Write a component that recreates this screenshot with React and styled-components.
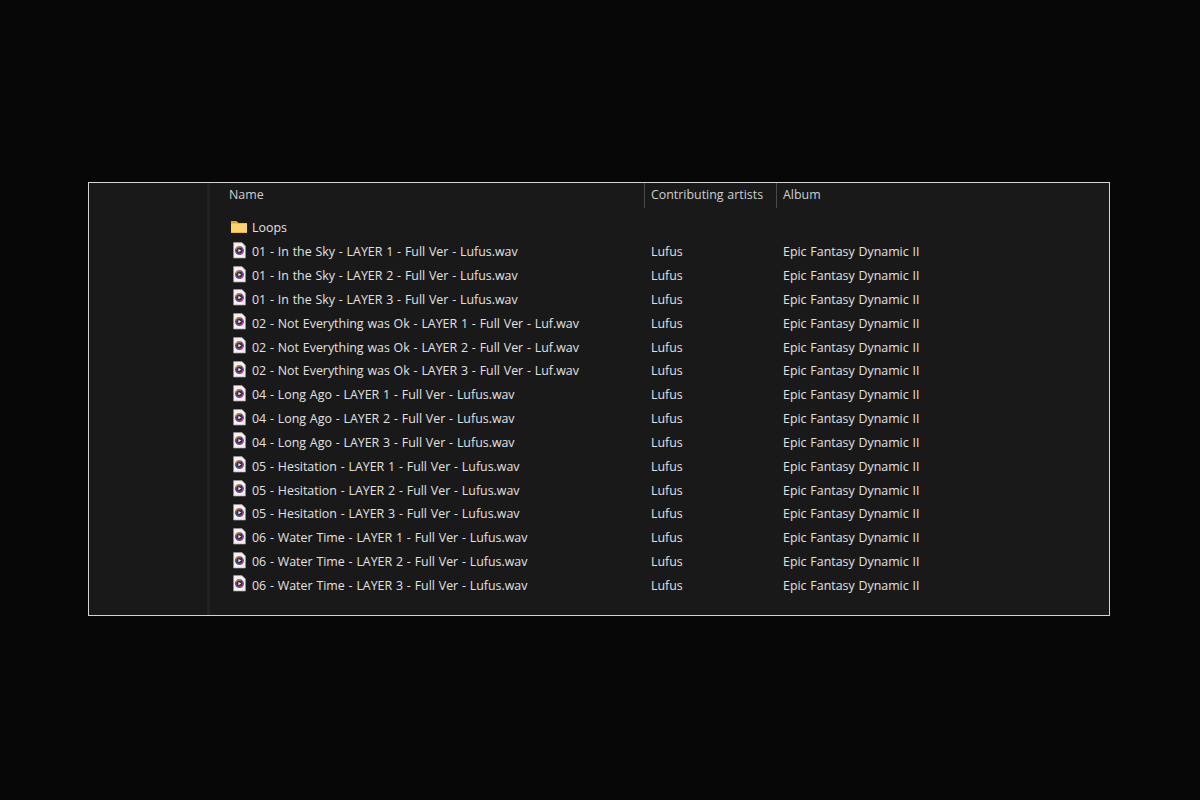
import styled, { createGlobalStyle } from "styled-components";

const GlobalStyle = createGlobalStyle`
  html, body {
    margin: 0;
    height: 100%;
    background: #060606;
  }
`;
const Page = styled.div`
  box-sizing: border-box;
  width: 1200px;
  height: 800px;
  padding: 182px 90px 0 88px;
  font-family: "Open Sans", "Noto Sans", sans-serif;
  font-size: 12.4px;
  word-spacing: 0.6px;
`;
const Frame = styled.div`
  box-sizing: border-box;
  display: flex;
  width: 1022px;
  height: 434px;
  background: #191919;
  border: 1px solid #d4d4d4;
`;
const Sidebar = styled.div`
  box-sizing: border-box;
  width: 121px;
  border-right: 3px solid #222222;
`;
const Main = styled.div`
  flex: 1;
  display: flex;
  flex-direction: column;
`;
const Header = styled.div`
  display: grid;
  grid-template-columns: 434px 132px 1fr;
  height: 25px;
  color: #cfcfcf;
`;
const HeaderCell = styled.div`
  display: flex;
  align-items: center;
  padding: 0 0 2px ${(p) => (p.$first ? "19px" : "6px")};
  border-left: ${(p) => (p.$first ? "none" : "1px solid #4a4a4a")};
`;
const Rows = styled.div`
  display: flex;
  flex-direction: column;
  padding-top: 8px;
`;
const Row = styled.div`
  display: grid;
  grid-template-columns: 434px 132px 1fr;
  height: 23.84px;
  align-items: center;
  color: #e2e2e2;
`;
const NameCell = styled.div`
  display: flex;
  align-items: center;
  gap: 5px;
  padding-left: 20px;
  white-space: nowrap;
`;
const Cell = styled.div`
  padding-left: 7px;
  white-space: nowrap;
`;
const IconSlot = styled.svg`
  flex: none;
  width: 17px;
  height: 17px;
  margin-top: ${(p) => p.$lift}px;
`;

function FolderIcon() {
  return (
    <IconSlot viewBox="0 0 17 17" $lift={-1}>
      <path d="M1 2 H6.5 L8.5 4 H17 V6 H1 Z" fill="#e0a42e" />
      <path d="M1 4.5 H17 V14 H1 Z" fill="#fdd469" />
      <path d="M1 13 H17 V14 H1 Z" fill="#e9b548" />
    </IconSlot>
  );
}

function AudioIcon() {
  return (
    <IconSlot viewBox="0 0 17 17" $lift={-3}>
      <path d="M3.6 0.6 H12 L15.4 4 V16 H3.6 Z" fill="#f5f5f5" stroke="#a0a0a0" strokeWidth="0.7" />
      <circle cx="9.4" cy="8.6" r="4.5" fill="#6d4aa8" />
      <path d="M5.2 7 A4.5 4.5 0 0 1 11.5 4.6 L9.4 8.6 Z" fill="#dc7a4a" />
      <path d="M13.8 9.6 A4.5 4.5 0 0 1 10.5 13 L9.4 8.6 Z" fill="#c9457c" />
      <circle cx="9.4" cy="8.6" r="3" fill="#33333c" />
      <path d="M8.4 6.9 L11.2 8.6 L8.4 10.3 Z" fill="#f5f5f5" />
    </IconSlot>
  );
}

const files = [
  "01 - In the Sky - LAYER 1 - Full Ver - Lufus.wav",
  "01 - In the Sky - LAYER 2 - Full Ver - Lufus.wav",
  "01 - In the Sky - LAYER 3 - Full Ver - Lufus.wav",
  "02 - Not Everything was Ok - LAYER 1 - Full Ver - Luf.wav",
  "02 - Not Everything was Ok - LAYER 2 - Full Ver - Luf.wav",
  "02 - Not Everything was Ok - LAYER 3 - Full Ver - Luf.wav",
  "04 - Long Ago - LAYER 1 - Full Ver - Lufus.wav",
  "04 - Long Ago - LAYER 2 - Full Ver - Lufus.wav",
  "04 - Long Ago - LAYER 3 - Full Ver - Lufus.wav",
  "05 - Hesitation - LAYER 1 - Full Ver - Lufus.wav",
  "05 - Hesitation - LAYER 2 - Full Ver - Lufus.wav",
  "05 - Hesitation - LAYER 3 - Full Ver - Lufus.wav",
  "06 - Water Time - LAYER 1 - Full Ver - Lufus.wav",
  "06 - Water Time - LAYER 2 - Full Ver - Lufus.wav",
  "06 - Water Time - LAYER 3 - Full Ver - Lufus.wav",
];

export default function App() {
  return (
    <Page>
      <GlobalStyle />
      <Frame>
        <Sidebar />
        <Main>
          <Header>
            <HeaderCell $first>Name</HeaderCell>
            <HeaderCell>Contributing artists</HeaderCell>
            <HeaderCell>Album</HeaderCell>
          </Header>
          <Rows>
            <Row>
              <NameCell>
                <FolderIcon />
                Loops
              </NameCell>
            </Row>
            {files.map((name) => (
              <Row key={name}>
                <NameCell>
                  <AudioIcon />
                  {name}
                </NameCell>
                <Cell>Lufus</Cell>
                <Cell>Epic Fantasy Dynamic II</Cell>
              </Row>
            ))}
          </Rows>
        </Main>
      </Frame>
    </Page>
  );
}
